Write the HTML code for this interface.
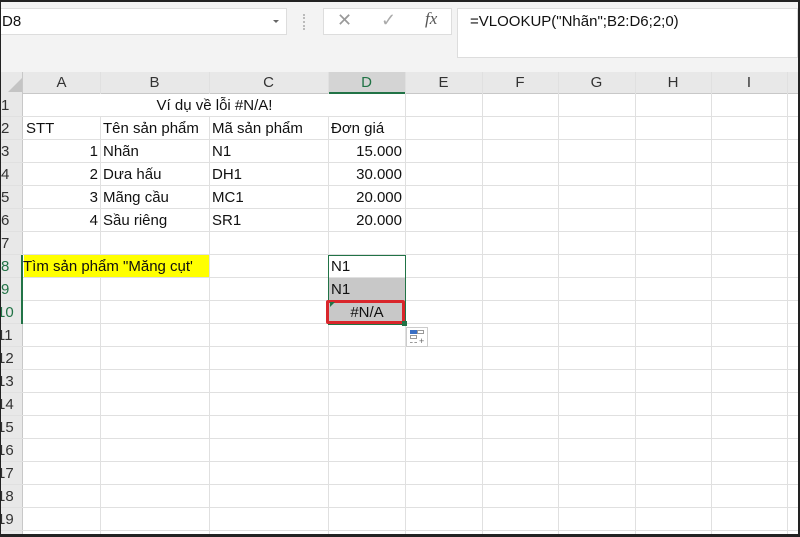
<!DOCTYPE html>
<html><head><meta charset="utf-8"><style>
*{margin:0;padding:0;box-sizing:border-box}
body{width:800px;height:537px;overflow:hidden;background:#fff;font-family:"Liberation Sans",sans-serif;position:relative}
.a{position:absolute}
.t{position:absolute;font-size:15px;color:#111;line-height:23px;white-space:nowrap}
.r{text-align:right}
.rh{position:absolute;left:0;width:23px;font-size:15px;color:#333;line-height:23px;padding-left:1px}
.ch{position:absolute;top:72px;height:22px;font-size:15px;color:#333;text-align:center;line-height:22px}
</style></head><body>
<div class="a" style="left:0;top:0;width:800px;height:72px;background:#f3f3f3"></div>
<div class="a" style="left:0;top:8px;width:287px;height:27px;background:#fff;border:1px solid #ddd"></div>
<div class="t" style="left:2px;top:9px;line-height:25px">D8</div>
<div class="a" style="left:273px;top:20px;width:0;height:0;border-left:3px solid transparent;border-right:3px solid transparent;border-top:3px solid #666"></div>
<div class="a" style="left:303px;top:14px;width:2px;height:16px;border-left:2px dotted #bbb"></div>
<div class="a" style="left:323px;top:8px;width:129px;height:27px;background:#fff;border:1px solid #ddd"></div>
<div class="a" style="left:337px;top:10px;font-size:18px;color:#999;font-weight:300">✕</div>
<div class="a" style="left:381px;top:10px;font-size:18px;color:#aaa">✓</div>
<div class="a" style="left:425px;top:9px;font-size:17px;color:#555;font-style:italic;font-family:'Liberation Serif',serif">fx</div>
<div class="a" style="left:457px;top:8px;width:341px;height:50px;background:#fff;border:1px solid #ddd"></div>
<div class="t" style="left:470px;top:9px;line-height:25px">=VLOOKUP("Nhãn";B2:D6;2;0)</div>
<div class="a" style="left:0;top:72px;width:800px;height:22px;background:#e8e8e8;border-bottom:1px solid #c8c8c8"></div>
<div class="a" style="left:0;top:72px;width:23px;height:465px;background:#e8e8e8;border-right:1px solid #c8c8c8"></div>
<div class="a" style="left:8px;top:78px;width:0;height:0;border-left:14px solid transparent;border-bottom:14px solid #c4c4c4"></div>
<div class="a" style="left:328px;top:72px;width:77px;height:22px;background:#d4d4d4;border-bottom:2px solid #217346"></div>
<div class="ch" style="left:23px;width:77px">A</div>
<div class="ch" style="left:100px;width:109px">B</div>
<div class="ch" style="left:209px;width:119px">C</div>
<div class="ch" style="left:328px;width:77px;color:#217346">D</div>
<div class="ch" style="left:405px;width:77px">E</div>
<div class="ch" style="left:482px;width:76px">F</div>
<div class="ch" style="left:558px;width:77px">G</div>
<div class="ch" style="left:635px;width:76px">H</div>
<div class="ch" style="left:711px;width:76px">I</div>
<div class="a" style="left:100px;top:72px;width:1px;height:465px;background:#e0e0e0"></div>
<div class="a" style="left:209px;top:72px;width:1px;height:465px;background:#e0e0e0"></div>
<div class="a" style="left:328px;top:72px;width:1px;height:465px;background:#e0e0e0"></div>
<div class="a" style="left:405px;top:72px;width:1px;height:465px;background:#e0e0e0"></div>
<div class="a" style="left:482px;top:72px;width:1px;height:465px;background:#e0e0e0"></div>
<div class="a" style="left:558px;top:72px;width:1px;height:465px;background:#e0e0e0"></div>
<div class="a" style="left:635px;top:72px;width:1px;height:465px;background:#e0e0e0"></div>
<div class="a" style="left:711px;top:72px;width:1px;height:465px;background:#e0e0e0"></div>
<div class="a" style="left:787px;top:72px;width:1px;height:465px;background:#e0e0e0"></div>
<div class="a" style="left:0;top:94px;width:800px;height:443px;background:repeating-linear-gradient(to bottom,transparent 0,transparent 22px,#e0e0e0 22px,#e0e0e0 23px)"></div>
<div class="a" style="left:24px;top:94px;width:381px;height:22px;background:#fff"></div>
<div class="rh" style="top:94px">1</div><div class="rh" style="top:117px">2</div><div class="rh" style="top:140px">3</div><div class="rh" style="top:163px">4</div><div class="rh" style="top:186px">5</div><div class="rh" style="top:209px">6</div><div class="rh" style="top:232px">7</div><div class="rh" style="top:255px;color:#217346">8</div><div class="rh" style="top:278px;color:#217346">9</div><div class="rh" style="top:301px;color:#217346;margin-left:-4px">10</div><div class="rh" style="top:324px;margin-left:-4px">11</div><div class="rh" style="top:347px;margin-left:-4px">12</div><div class="rh" style="top:370px;margin-left:-4px">13</div><div class="rh" style="top:393px;margin-left:-4px">14</div><div class="rh" style="top:416px;margin-left:-4px">15</div><div class="rh" style="top:439px;margin-left:-4px">16</div><div class="rh" style="top:462px;margin-left:-4px">17</div><div class="rh" style="top:485px;margin-left:-4px">18</div><div class="rh" style="top:508px;margin-left:-4px">19</div>
<div class="a" style="left:21px;top:255px;width:2px;height:69px;background:#217346"></div>
<div class="t" style="left:24px;top:94px;width:381px;text-align:center">Ví dụ về lỗi #N/A!</div>
<div class="t" style="left:26px;top:117px">STT</div>
<div class="t" style="left:103px;top:117px">Tên sản phẩm</div>
<div class="t" style="left:212px;top:117px">Mã sản phẩm</div>
<div class="t" style="left:331px;top:117px">Đơn giá</div>
<div class="t r" style="left:24px;top:140px;width:74px">1</div>
<div class="t r" style="left:24px;top:163px;width:74px">2</div>
<div class="t r" style="left:24px;top:186px;width:74px">3</div>
<div class="t r" style="left:24px;top:209px;width:74px">4</div>
<div class="t" style="left:103px;top:140px">Nhãn</div>
<div class="t" style="left:103px;top:163px">Dưa hấu</div>
<div class="t" style="left:103px;top:186px">Mãng cầu</div>
<div class="t" style="left:103px;top:209px">Sầu riêng</div>
<div class="t" style="left:212px;top:140px">N1</div>
<div class="t" style="left:212px;top:163px">DH1</div>
<div class="t" style="left:212px;top:186px">MC1</div>
<div class="t" style="left:212px;top:209px">SR1</div>
<div class="t r" style="left:329px;top:140px;width:73px">15.000</div>
<div class="t r" style="left:329px;top:163px;width:73px">30.000</div>
<div class="t r" style="left:329px;top:186px;width:73px">20.000</div>
<div class="t r" style="left:329px;top:209px;width:73px">20.000</div>
<div class="a" style="left:24px;top:255px;width:185px;height:22px;background:#ffff00"></div>
<div class="t" style="left:23px;top:255px">Tìm sản phẩm "Măng cụt'</div>
<div class="a" style="left:329px;top:278px;width:76px;height:46px;background:#c8c8c8"></div>
<div class="a" style="left:328px;top:255px;width:78px;height:70px;border:1px solid #217346"></div>
<div class="t" style="left:331px;top:255px">N1</div>
<div class="t" style="left:331px;top:278px">N1</div>
<div class="a" style="left:326px;top:300px;width:79px;height:24px;border:3px solid #d9262b;border-radius:2px"></div>
<div class="t" style="left:329px;top:301px;width:76px;text-align:center">#N/A</div>
<div class="a" style="left:330px;top:302px;width:0;height:0;border-right:5px solid transparent;border-top:5px solid #217346"></div>
<div class="a" style="left:402px;top:321px;width:5px;height:5px;background:#217346"></div>
<div class="a" style="left:406px;top:327px;width:22px;height:20px;background:#fff;border:1px solid #ccc"></div>
<div class="a" style="left:410px;top:330px;width:7px;height:4px;background:#3a6fc4"></div>
<div class="a" style="left:417px;top:330px;width:7px;height:4px;border:1px solid #999"></div>
<div class="a" style="left:410px;top:335px;width:7px;height:4px;border:1px solid #999"></div>
<div class="a" style="left:410px;top:340px;width:7px;height:3px;border-bottom:1px dashed #999"></div>
<div class="a" style="left:419px;top:336px;font-size:9px;color:#666">+</div>
<div class="a" style="left:0;top:0;width:800px;height:537px;border:2px solid #222;border-left-width:1px;border-bottom-width:3px"></div>
</body></html>
